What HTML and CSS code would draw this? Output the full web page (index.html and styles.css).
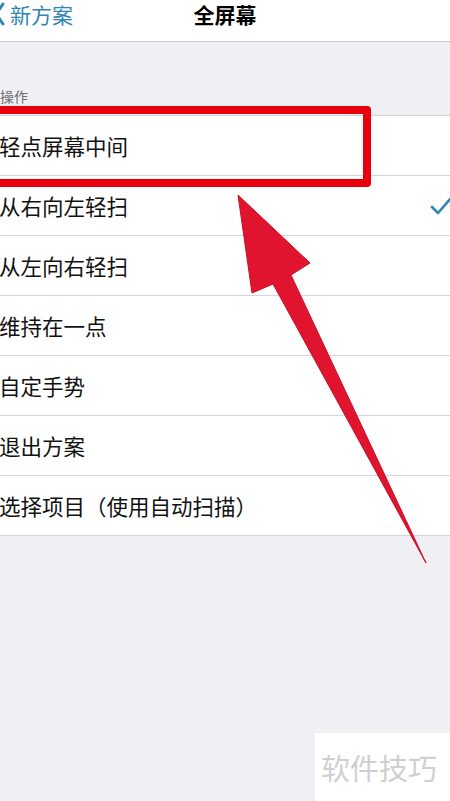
FILE: index.html
```html
<!DOCTYPE html>
<html lang="zh-CN">
<head>
    <meta charset="UTF-8">
    <meta name="viewport" content="width=device-width, initial-scale=1.0">
    <title>全屏幕</title>
    <link rel="stylesheet" href="styles.css">
</head>
<body>
    <header class="navbar">
        <a class="back">
            <svg class="chevron" width="12" height="24" viewBox="0 0 12 24"><path d="M9 2 L2 12 L9 22" fill="none" stroke="#2f86b4" stroke-width="3" stroke-linecap="round"/></svg>
            <span>新方案</span>
        </a>
        <h1 class="title">全屏幕</h1>
    </header>

    <main class="content">
        <div class="section-title">操作</div>
        <ul class="list">
            <li>轻点屏幕中间</li>
            <li>从右向左轻扫
                <svg class="check" width="24" height="20" viewBox="0 0 24 20"><path d="M2 11 L8 17 L21 2" fill="none" stroke="#2f86b4" stroke-width="2.6" stroke-linecap="round" stroke-linejoin="round"/></svg>
            </li>
            <li>从左向右轻扫</li>
            <li>维持在一点</li>
            <li>自定手势</li>
            <li>退出方案</li>
            <li>选择项目（使用自动扫描）</li>
        </ul>
    </main>

    <!-- annotation overlay -->
    <div class="highlight"></div>
    <svg class="arrow" width="450" height="801" viewBox="0 0 450 801">
        <path d="M238 195 L310 263 L291 275 L426 563 L273 284 L252 293 Z" fill="#e0142e" stroke="#c80f25" stroke-width="1"/>
    </svg>

    <div class="watermark">软件技巧</div>
</body>
</html>
```

FILE: styles.css
```css
body {
    margin: 0;
    padding: 0;
    width: 450px;
    height: 801px;
    overflow: hidden;
    background-color: #efeff4;
    font-family: "Noto Sans CJK SC", "Noto Sans", sans-serif;
    position: relative;
}

.navbar {
    height: 39px;
    padding-top: 2px;
    background-color: #ffffff;
    border-bottom: 1px solid #c8c8cc;
    display: flex;
    align-items: flex-start;
    justify-content: center;
    position: relative;
}

.back {
    position: absolute;
    left: -6px;
    top: 2px;
    height: 24px;
    display: flex;
    align-items: center;
    color: #2f86b4;
    font-size: 21px;
    line-height: 24px;
}

.back span {
    margin-left: 4px;
}

.title {
    margin: 0;
    font-size: 21px;
    line-height: 24px;
    font-weight: bold;
    color: #000;
}

.content {
    padding-top: 44px;
}

.section-title {
    color: #6d6d72;
    font-size: 14px;
    height: 29px;
    line-height: 20px;
}

.list {
    list-style: none;
    margin: 0;
    padding: 0;
    background-color: #ffffff;
    border-top: 1px solid #d6d6da;
}

.list li {
    height: 59px;
    border-bottom: 1px solid #d6d6da;
    display: flex;
    align-items: center;
    justify-content: space-between;
    font-size: 21.5px;
    color: #111;
    margin-left: -1px;
}

.check {
    margin-right: -4px;
}

.highlight {
    position: absolute;
    left: -12px;
    top: 106px;
    width: 367px;
    height: 65px;
    border: 8px solid #e8000f;
    border-radius: 4px;
}

.arrow {
    position: absolute;
    left: 0;
    top: 0;
}

.watermark {
    position: absolute;
    left: 315px;
    top: 733px;
    width: 135px;
    height: 68px;
    background-color: #ffffff;
    color: #cfcfcf;
    font-size: 29px;
    display: flex;
    align-items: center;
    padding-left: 6px;
    box-sizing: border-box;
}
```
